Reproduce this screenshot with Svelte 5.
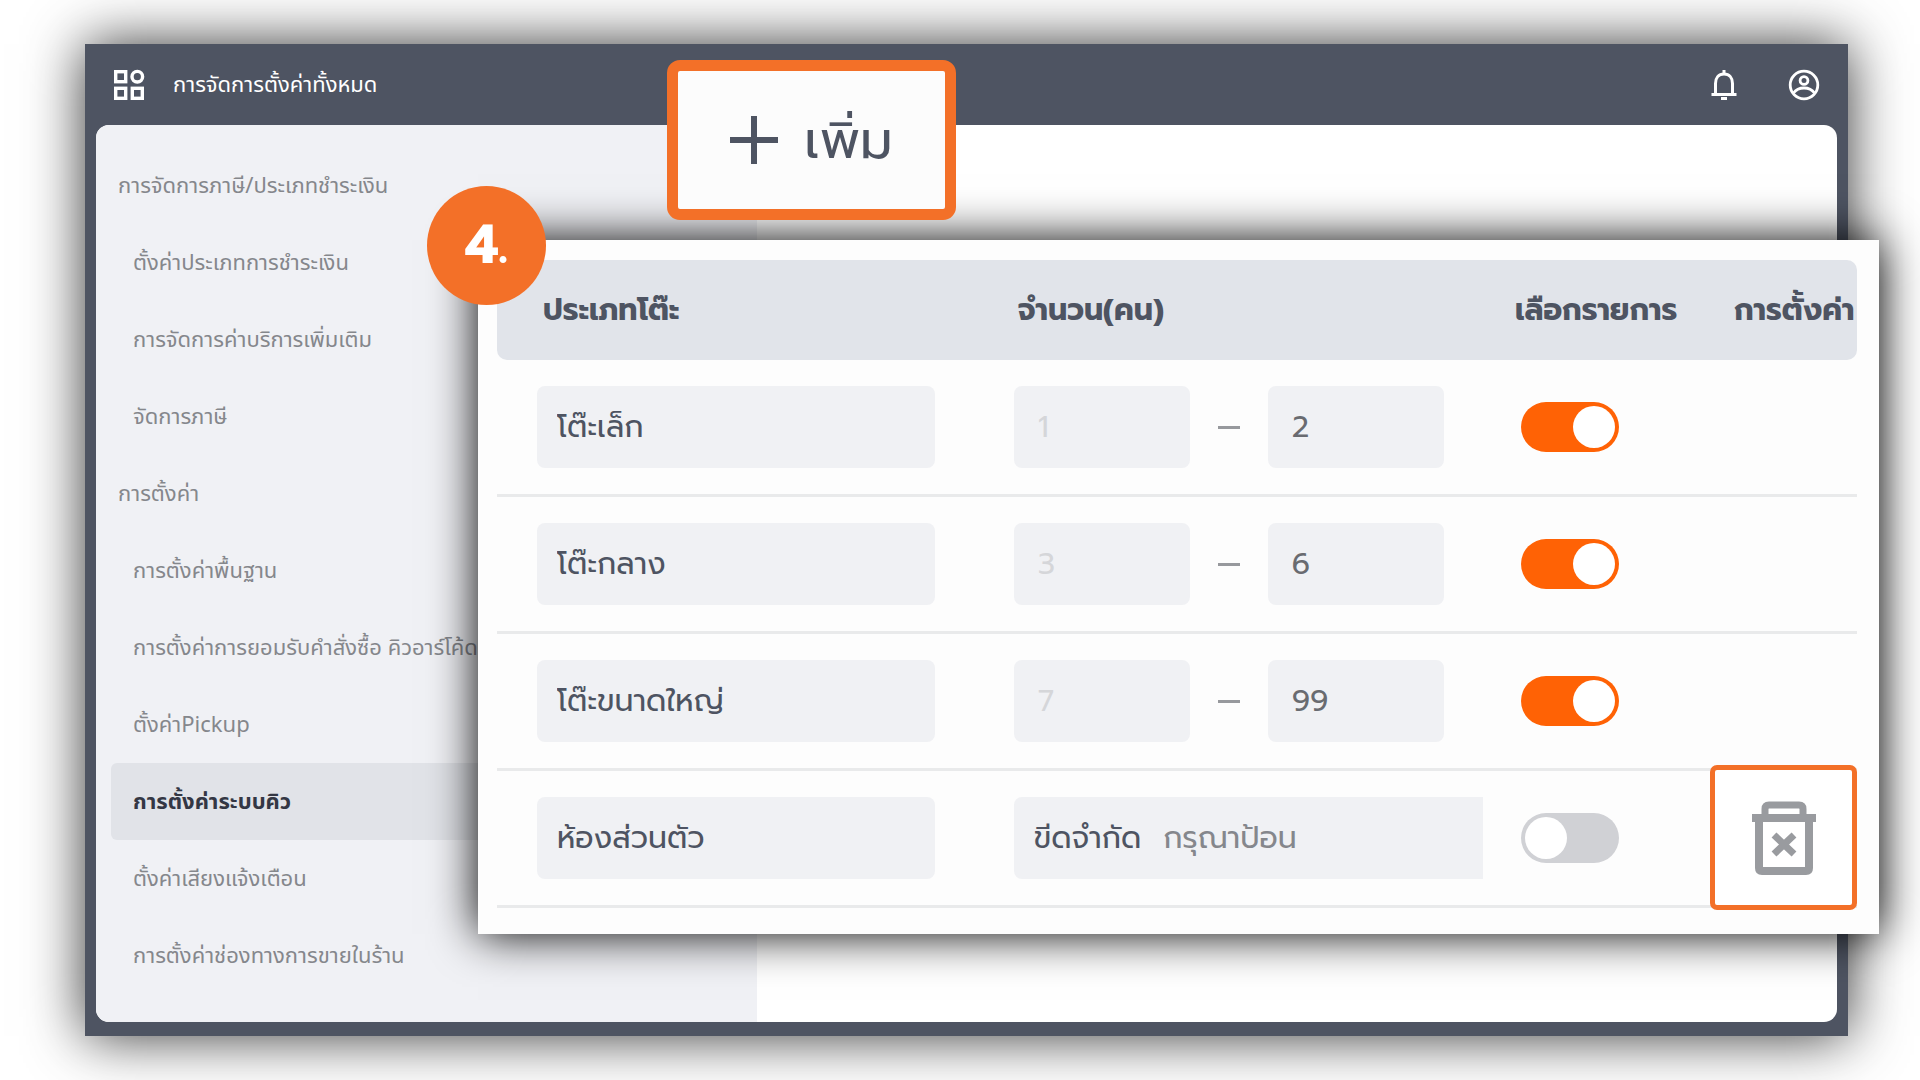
<script lang="ts">
  interface QueueTable {
    name: string;
    min?: number;
    max?: number;
    enabled: boolean;
    removable?: boolean;
  }

  const menu = [
    { label: "การจัดการภาษี/ประเภทชำระเงิน", group: true },
    { label: "ตั้งค่าประเภทการชำระเงิน" },
    { label: "การจัดการค่าบริการเพิ่มเติม" },
    { label: "จัดการภาษี" },
    { label: "การตั้งค่า", group: true },
    { label: "การตั้งค่าพื้นฐาน" },
    { label: "การตั้งค่าการยอมรับคำสั่งซื้อ คิวอาร์โค้ด" },
    { label: "ตั้งค่าPickup" },
    { label: "การตั้งค่าระบบคิว", active: true },
    { label: "ตั้งค่าเสียงแจ้งเตือน" },
    { label: "การตั้งค่าช่องทางการขายในร้าน" },
  ];

  let tables: QueueTable[] = $state([
    { name: "โต๊ะเล็ก", min: 1, max: 2, enabled: true },
    { name: "โต๊ะกลาง", min: 3, max: 6, enabled: true },
    { name: "โต๊ะขนาดใหญ่", min: 7, max: 99, enabled: true },
    { name: "ห้องส่วนตัว", enabled: false, removable: true },
  ]);
</script>

<div class="page">
  <div class="window">
    <header>
      <button class="icon" aria-label="เมนู">
        <svg width="32" height="32" viewBox="0 0 32 32" fill="none" stroke="#fff" stroke-width="3.4">
          <rect x="2.7" y="2.7" width="10" height="10" />
          <circle cx="24.3" cy="7.7" r="5.3" />
          <rect x="2.7" y="19.3" width="10" height="10" />
          <rect x="19.3" y="19.3" width="10" height="10" />
        </svg>
      </button>
      <h1>การจัดการตั้งค่าทั้งหมด</h1>
      <button class="icon" aria-label="การแจ้งเตือน">
        <svg width="32" height="32" viewBox="0 0 32 32" fill="none" stroke="#fff" stroke-width="3">
          <path d="M3.500 25.500h25M7.500 25V14.500c0-5.500 3-9.500 8.500-9.500s8.500 4 8.500 9.500V25" />
          <path d="M16 5V1M13 29.500h6" />
        </svg>
      </button>
      <button class="icon" aria-label="บัญชี">
        <svg width="32" height="32" viewBox="0 0 32 32" fill="none" stroke="#fff" stroke-width="2.8">
          <circle cx="16" cy="16" r="13.800" />
          <circle cx="16" cy="11.500" r="3.900" />
          <path d="M5.500 24c2.500-3.500 6-5 10.500-5s8 1.500 10.500 5" />
        </svg>
      </button>
    </header>

    <div class="body">
      <nav>
        {#each menu as item}
          <a href="#menu" class:group={item.group} class:active={item.active}>{item.label}</a>
        {/each}
      </nav>
      <main></main>
    </div>
  </div>

  <section class="panel">
    <table>
      <thead>
        <tr>
          <th class="name">ประเภทโต๊ะ</th>
          <th class="count">จำนวน(คน)</th>
          <th class="pick">เลือกรายการ</th>
          <th class="setting">การตั้งค่า</th>
        </tr>
      </thead>
      <tbody>
        {#each tables as row}
          <tr>
            <td class="name">
              <input class="field" type="text" aria-label="ประเภทโต๊ะ" bind:value={row.name} />
            </td>
            <td>
              {#if row.removable}
                <label class="field limit">
                  <span>ขีดจำกัด</span>
                  <input type="text" placeholder="กรุณาป้อน" />
                </label>
              {:else}
                <div class="range">
                  <input class="field" type="text" aria-label="จำนวนต่ำสุด" value={row.min} disabled />
                  <span class="dash"></span>
                  <input class="field" type="text" aria-label="จำนวนสูงสุด" bind:value={row.max} />
                </div>
              {/if}
            </td>
            <td class="pick">
              <input class="toggle" type="checkbox" aria-label="เลือกรายการ" bind:checked={row.enabled} />
            </td>
            <td class="setting">
              {#if row.removable}
                <button class="remove" aria-label="ลบ">
                  <svg width="68" height="76" viewBox="0 0 68 76" fill="none" stroke="#999b9f" stroke-width="8">
                    <path d="M2 18h64" stroke-linejoin="round" />
                    <path d="M15 17V9q0-4 4-4h30q4 0 4 4v8" stroke-width="7" />
                    <path d="M9 18v50q0 3 3 3h44q3 0 3-3V18" />
                    <path d="M24 35l20 19M44 35L24 54" stroke-width="7" />
                  </svg>
                </button>
              {/if}
            </td>
          </tr>
        {/each}
      </tbody>
    </table>
  </section>

  <button class="add">
    <svg width="48" height="48" viewBox="0 0 48 48" stroke="#4e5462" stroke-width="6">
      <path d="M24 0v48M0 24h48" />
    </svg>
    เพิ่ม
  </button>

  <div class="step">4.</div>
</div>

<style>
  :global(body) {
    margin: 0;
    background: #fff;
  }

  .page {
    position: relative;
    box-sizing: border-box;
    min-height: 100vh;
    padding: 44px 72px 44px 85px;
    display: flex;
    overflow: hidden;
    font-family: "Prompt", "Kanit", "Noto Sans", sans-serif;
    color: #4e5462;
  }

  button {
    padding: 0;
    border: 0;
    background: none;
    font: inherit;
    color: inherit;
    cursor: pointer;
  }

  svg {
    display: block;
  }

  .window {
    flex: 1;
    display: flex;
    flex-direction: column;
    padding: 0 11px 14px;
    background: #4e5462;
    box-shadow: 0 0 54px rgba(0, 0, 0, 0.8);
    font-family: "Noto Sans", "Noto Sans Thai", "Noto Sans Thai UI", sans-serif;
  }

  header {
    display: flex;
    align-items: center;
    height: 81px;
    padding: 0 17px;
  }

  h1 {
    flex: 1;
    margin: 0 0 0 28px;
    font-size: 22px;
    font-weight: 400;
    color: #fff;
  }

  .icon + .icon {
    margin-left: 48px;
  }

  .body {
    flex: 1;
    display: flex;
    border-radius: 13px;
    overflow: hidden;
    background: #fff;
  }

  nav {
    box-sizing: border-box;
    width: 661px;
    padding: 22px 0 28px 15px;
    background: #f0f1f5;
  }

  nav a {
    display: flex;
    align-items: center;
    height: 77px;
    padding-left: 22px;
    border-radius: 6px;
    font-size: 22px;
    color: #85878c;
    text-decoration: none;
  }

  nav a.group {
    padding-left: 7px;
  }

  nav a.active {
    background: #e1e3e8;
    color: #343744;
    font-weight: 700;
  }

  .panel {
    position: absolute;
    top: 240px;
    left: 478px;
    right: 41px;
    padding: 20px 22px 26px 19px;
    background: #fdfdfd;
    box-shadow: 0 0 44px #000;
  }

  table {
    width: 100%;
    table-layout: fixed;
    border-spacing: 0;
  }

  th {
    height: 100px;
    padding: 0;
    background: #e1e4ea;
    font-size: 30px;
    font-weight: 700;
    text-align: left;
    white-space: nowrap;
  }

  th.name {
    width: 38%;
    padding-left: 46px;
    box-sizing: border-box;
    border-radius: 10px 0 0 10px;
  }

  th.count {
    padding-left: 4px;
  }

  th.pick {
    width: 195px;
  }

  th.setting {
    width: 123px;
    padding-left: 24px;
    border-radius: 0 10px 10px 0;
  }

  td {
    height: 134px;
    padding: 0;
    border-bottom: 3px solid #e9eaeb;
  }

  td.name {
    padding: 0 79px 0 40px;
  }

  td.pick {
    padding-left: 6px;
  }

  td.setting {
    position: relative;
  }

  .field {
    box-sizing: border-box;
    width: 100%;
    height: 82px;
    padding: 0 20px;
    border: 0;
    border-radius: 8px;
    background: #f0f1f4;
    font: inherit;
    font-size: 30px;
    color: #4e5462;
  }

  .range {
    display: flex;
    align-items: center;
  }

  .range .field {
    width: 176px;
    padding: 0 24px;
    color: #696b70;
  }

  .range .field:disabled {
    color: #d5d6d9;
  }

  .dash {
    width: 22px;
    height: 3px;
    margin: 0 28px;
    background: #97999d;
  }

  .limit {
    display: flex;
    align-items: center;
    gap: 22px;
    width: 469px;
    border-radius: 8px 0 0 8px;
  }

  .limit input {
    flex: 1;
    min-width: 0;
    padding: 0;
    border: 0;
    background: none;
    font: inherit;
  }

  .limit input::placeholder {
    color: #85878c;
  }

  .toggle {
    display: block;
    appearance: none;
    width: 98px;
    height: 50px;
    margin: 0;
    padding: 4px;
    box-sizing: border-box;
    border-radius: 25px;
    background: #d0d1d5;
  }

  .toggle::before {
    content: "";
    display: block;
    width: 42px;
    height: 42px;
    border-radius: 50%;
    background: #fff;
  }

  .toggle:checked {
    background: #ff6205;
  }

  .toggle:checked::before {
    margin-left: auto;
  }

  .remove {
    position: absolute;
    inset: -6px 0 -5px;
    display: flex;
    align-items: center;
    justify-content: center;
    border: 5px solid #f37028;
    border-radius: 7px;
    background: #fff;
  }

  .add {
    position: absolute;
    top: 60px;
    left: 667px;
    box-sizing: border-box;
    display: flex;
    align-items: center;
    justify-content: center;
    gap: 26px;
    width: 289px;
    height: 160px;
    border: 11px solid #f37028;
    border-radius: 13px;
    background: #fcfcfc;
    font-size: 52px;
  }

  .step {
    position: absolute;
    top: 186px;
    left: 427px;
    width: 119px;
    height: 119px;
    border-radius: 50%;
    background: #f37028;
    color: #fff;
    font-size: 54px;
    font-weight: 700;
    line-height: 119px;
    text-align: center;
  }
</style>
